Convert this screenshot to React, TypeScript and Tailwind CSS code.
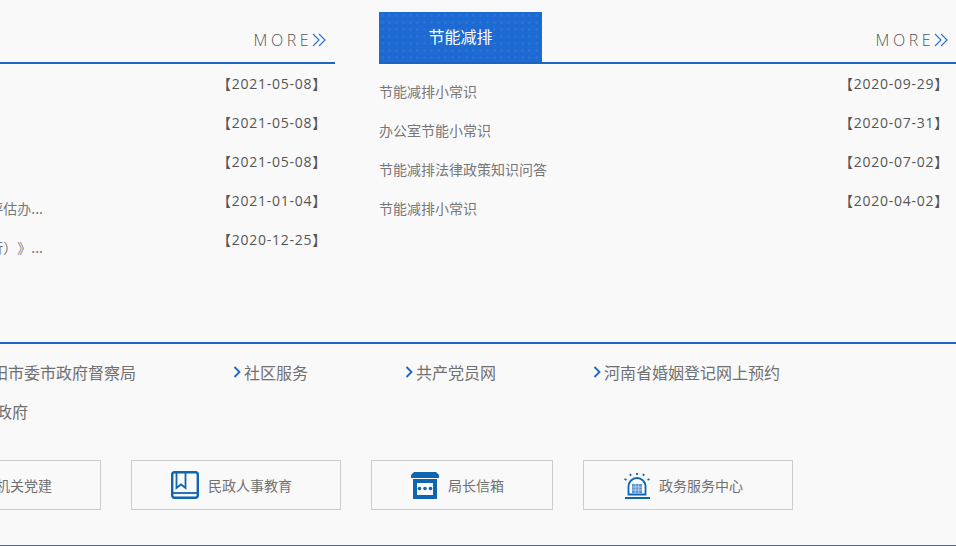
const font = "font-['Microsoft_YaHei','Noto_Sans_CJK_SC','Open_Sans',sans-serif]";

const leftDates = ["2021-05-08", "2021-05-08", "2021-05-08", "2021-01-04", "2020-12-25"];
const leftTitles = ["", "", "", "关于开展第三方评估办...", "（试行）》..."];
const rightNews = [
  { title: "节能减排小常识", date: "2020-09-29" },
  { title: "办公室节能小常识", date: "2020-07-31" },
  { title: "节能减排法律政策知识问答", date: "2020-07-02" },
  { title: "节能减排小常识", date: "2020-04-02" },
];

const DoubleChevron = () => (
  <svg width="15" height="14" viewBox="0 0 15 14" fill="none" stroke="#2f74d0" strokeWidth="1.2">
    <path d="M1 1l6 6-6 6M7 1l6 6-6 6" />
  </svg>
);

const More = () => (
  <div className="flex items-center">
    <span className="font-['Open_Sans',sans-serif] font-light text-[16px] tracking-[3.5px] text-[#555]">MORE</span>
    <DoubleChevron />
  </div>
);

const Date = ({ value }: { value: string }) => (
  <span className="font-['Open_Sans','Noto_Sans_CJK_SC',sans-serif] text-[14px] leading-[20px] tracking-[0.75px] text-[#555] whitespace-nowrap">
    【{value}】
  </span>
);

const LinkItem = ({ text, className }: { text: string; className: string }) => (
  <div className={`flex items-center gap-[3px] ${className}`}>
    <svg width="8" height="12" viewBox="0 0 8 12" fill="none" stroke="#1a66c0" strokeWidth="1.8">
      <path d="M1.500 1l5 5-5 5" />
    </svg>
    <span className="text-[16px] text-[#707070] whitespace-nowrap">{text}</span>
  </div>
);

const BookIcon = () => (
  <svg width="28" height="28" viewBox="0 0 28 28" fill="none" stroke="#0f66b0" strokeWidth="2.4">
    <rect x="1.200" y="1.200" width="25.600" height="25.600" rx="2.500" />
    <path strokeWidth="1.800" d="M1 22h26" />
    <path strokeWidth="1.800" d="M5.500 1v16l4.500-3.500 4.500 3.500V1" />
  </svg>
);

const MailboxIcon = () => (
  <svg width="28" height="27" viewBox="0 0 28 27" fill="#0f66b0">
    <path d="M3 0h22l3 3v3H0V3z" />
    <path fillRule="evenodd" d="M2 7h24v20H2zM6 11v12h16V11z" />
    <circle cx="8.500" cy="16.500" r="1.800" />
    <circle cx="14" cy="16.500" r="1.800" />
    <circle cx="19.500" cy="16.500" r="1.800" />
  </svg>
);

const ServiceIcon = () => (
  <svg width="26" height="27" viewBox="0 0 26 27" fill="none" stroke="#0f66b0">
    <path strokeWidth="2" d="M1 26h25" />
    <path strokeWidth="1.800" d="M4.500 22.500v-8a8.500 8.500 0 0 1 17 0v8z" />
    <path fill="#5a94cc" stroke="none" d="M8 12h10v9H8z" />
    <path stroke="#faf9fa" strokeWidth="0.500" d="M8 15h10M8 18h10M11.300 12v9M14.700 12v9" />
    <path strokeWidth="1.800" d="M13 1v2M6 2l1 1.800M20 2l-1 1.800M0.500 7l2 1M25.500 7l-2 1" />
  </svg>
);

const ServiceBox = ({ icon, text, className }: { icon: React.ReactNode; text: string; className: string }) => (
  <div className={`h-[50px] border border-[#ccc] flex items-center justify-center gap-[9px] pr-[9px] text-[14px] text-[#707070] ${className}`}>
    {icon}
    <span>{text}</span>
  </div>
);

export default function App() {
  return (
    <div className={`w-[956px] h-[546px] overflow-hidden bg-[#faf9fa] flex flex-col ${font}`}>
      <div className="h-[344px] shrink-0 flex border-b-2 border-[#1a66c0]">
        <div className="w-[335px]">
          <div className="h-[64px] border-b-2 border-[#1a66c0] flex items-end justify-end pr-[8px] pb-[10px]">
            <More />
          </div>
          <div className="pt-[10px] flex flex-col">
            {leftDates.map((date, i) => (
              <div key={i} className="h-[39px] flex justify-between pr-[8px]">
                <div className="w-[43px] h-[20px] mt-[7px] flex justify-end overflow-hidden text-[14px] leading-[20px] text-[#777] whitespace-nowrap [text-spacing-trim:space-all]">
                  {leftTitles[i]}
                </div>
                <Date value={date} />
              </div>
            ))}
          </div>
        </div>
        <div className="ml-[44px] flex-1">
          <div className="h-[64px] border-b-2 border-[#1a66c0] flex justify-between items-end pr-[7px]">
            <div className="w-[163px] h-[50px] pb-[3px] bg-[#1d6ad2] bg-[radial-gradient(circle,#2a74d8_1px,transparent_1.5px)] bg-[length:7px_7px] text-white text-[16px] flex items-center justify-center">
              节能减排
            </div>
            <div className="pb-[10px]">
              <More />
            </div>
          </div>
          <div className="pt-[10px] flex flex-col">
            {rightNews.map((item) => (
              <div key={item.title + item.date} className="h-[39px] flex justify-between pr-[7px]">
                <span className="mt-[7px] text-[14px] leading-[20px] text-[#777]">{item.title}</span>
                <Date value={item.date} />
              </div>
            ))}
          </div>
        </div>
      </div>

      <div className="pt-[8px] shrink-0">
        <div className="h-[39px] flex items-center">
          <div className="w-[233px]">
            <div className="w-[136px] flex justify-end overflow-hidden text-[16px] text-[#707070] whitespace-nowrap">
              南阳市委市政府督察局
            </div>
          </div>
          <LinkItem text="社区服务" className="w-[172px]" />
          <LinkItem text="共产党员网" className="w-[188px]" />
          <LinkItem text="河南省婚姻登记网上预约" className="" />
        </div>
        <div className="h-[39px] flex items-center">
          <span className="text-[16px] text-[#707070] w-[28px] flex justify-end overflow-hidden whitespace-nowrap">政府</span>
        </div>
      </div>

      <div className="mt-[30px] flex gap-[30px] shrink-0">
        <div className="w-[101px] h-[50px] border border-l-0 border-[#ccc] flex items-center justify-end overflow-hidden pr-[48px] text-[14px] text-[#707070] whitespace-nowrap">
          机关党建
        </div>
        <ServiceBox icon={<BookIcon />} text="民政人事教育" className="w-[210px]" />
        <ServiceBox icon={<MailboxIcon />} text="局长信箱" className="w-[182px]" />
        <ServiceBox icon={<ServiceIcon />} text="政务服务中心" className="w-[210px]" />
      </div>

      <div className="mt-[35px] h-px shrink-0 bg-[#2a7ab5]" />
    </div>
  );
}
